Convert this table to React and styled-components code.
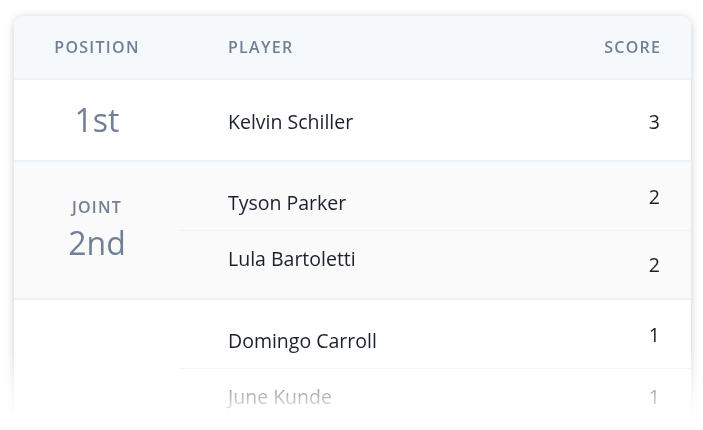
import React from "react";
import styled, { createGlobalStyle } from "styled-components";

const GlobalStyle = createGlobalStyle`
  html, body { margin: 0; padding: 0; background: #ffffff; }
  body { font-family: "Open Sans", "Noto Sans", "Liberation Sans", sans-serif; }
`;

const Viewport = styled.div`
  height: 430px;
  overflow: hidden;
  box-sizing: border-box;
  padding: 16px 12px 0 14px;
  -webkit-mask-image: linear-gradient(to bottom, #000 0, #000 350px, transparent 418px);
  mask-image: linear-gradient(to bottom, #000 0, #000 350px, transparent 418px);
`;

const Card = styled.div`
  background: #ffffff;
  border-radius: 10px 10px 0 0;
  box-shadow: 0 1px 8px rgba(0, 0, 0, 0.2);
  overflow: hidden;
`;

const HeaderRow = styled.div`
  display: grid;
  grid-template-columns: 166px 1fr auto;
  align-items: center;
  height: 62px;
  background: #f6f9fc;
  border-bottom: 2px solid #edf2f7;
  padding-right: 31px;
`;

const HeaderCell = styled.div`
  font-size: 16px;
  font-weight: 600;
  letter-spacing: 0.08em;
  color: #718096;
  text-transform: uppercase;
  text-align: ${(p) => p.$align || "left"};
  padding-left: ${(p) => p.$indent || 0}px;
  margin-right: ${(p) => (p.$align === "right" ? "-0.08em" : "0")};
`;

const Group = styled.div`
  display: grid;
  grid-template-columns: 166px 1fr;
  background: ${(p) => (p.$shaded ? "#fafafb" : "#ffffff")};
  border-bottom: 2px solid #edf2f7;
`;

const PositionCell = styled.div`
  display: flex;
  flex-direction: column;
  align-items: center;
  justify-content: center;
  color: #718096;
`;

const JointLabel = styled.div`
  font-size: 16px;
  font-weight: 600;
  letter-spacing: 0.08em;
  line-height: 20px;
  margin-bottom: 6px;
`;

const Rank = styled.div`
  font-size: 32px;
  line-height: 40px;
  font-weight: 400;
`;

const PlayerList = styled.div`
  display: flex;
  flex-direction: column;
`;

const PlayerRow = styled.div`
  display: flex;
  justify-content: space-between;
  align-items: flex-start;
  height: ${(p) => p.$h}px;
  padding: 0 31px 0 48px;
  border-top: ${(p) => (p.$divided ? "1px solid #edf2f7" : "none")};
  color: #1a202c;
  font-size: 19.5px;
  line-height: 24px;
`;

const Name = styled.span`
  padding-top: ${(p) => p.$top}px;
`;

const Score = styled.span`
  padding-top: ${(p) => p.$top}px;
`;

const groups = [
  {
    rank: "1st",
    joint: false,
    shaded: false,
    rows: [{ name: "Kelvin Schiller", score: 3, h: 80, nt: 30, st: 30 }],
  },
  {
    rank: "2nd",
    joint: true,
    shaded: true,
    rows: [
      { name: "Tyson Parker", score: 2, h: 68, nt: 29, st: 23 },
      { name: "Lula Bartoletti", score: 2, h: 67, nt: 16, st: 22 },
    ],
  },
  {
    rank: "",
    joint: false,
    shaded: false,
    rows: [
      { name: "Domingo Carroll", score: 1, h: 68, nt: 29, st: 23 },
      { name: "June Kunde", score: 1, h: 68, nt: 16, st: 16 },
    ],
  },
];

export default function App() {
  return (
    <>
      <GlobalStyle />
      <Viewport>
        <Card>
          <HeaderRow>
            <HeaderCell $align="center">Position</HeaderCell>
            <HeaderCell $indent={48}>Player</HeaderCell>
            <HeaderCell $align="right">Score</HeaderCell>
          </HeaderRow>
          {groups.map((g, gi) => (
            <Group key={gi} $shaded={g.shaded}>
              <PositionCell>
                {g.joint && <JointLabel>JOINT</JointLabel>}
                {g.rank && <Rank>{g.rank}</Rank>}
              </PositionCell>
              <PlayerList>
                {g.rows.map((r, ri) => (
                  <PlayerRow key={ri} $h={r.h} $divided={ri > 0}>
                    <Name $top={r.nt}>{r.name}</Name>
                    <Score $top={r.st}>{r.score}</Score>
                  </PlayerRow>
                ))}
              </PlayerList>
            </Group>
          ))}
        </Card>
      </Viewport>
    </>
  );
}
